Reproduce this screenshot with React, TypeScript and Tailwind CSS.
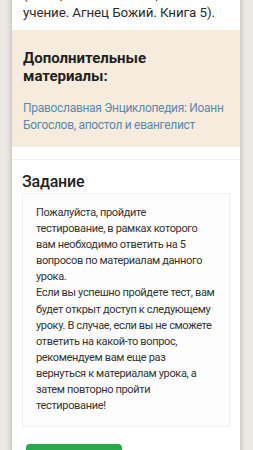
const Line = ({ children }: { children: React.ReactNode }) => (
  <span className="block whitespace-nowrap">{children}</span>
);

export default function App() {
  return (
    <div className="w-[253px] h-[450px] overflow-hidden bg-[#ece8e4] font-['Roboto','Noto_Sans',sans-serif]">
      <div className="ml-[12px] w-[228px] bg-white shadow-[0_0_4px_2px_rgba(120,100,90,0.25)]">
        <div className="px-[11px] pb-[8px] text-[13.4px] leading-[18px] tracking-[-0.1px] text-[#2c2c2c] -mt-[14px]">
          <Line>(Священное Писание, Богословское</Line>
          <Line>учение. Агнец Божий. Книга 5).</Line>
        </div>
        <div className="bg-[#f5ecdd] px-[11px] pt-[19px] pb-[13px]">
          <h3 className="text-[15px] leading-[18px] font-bold text-[#1f1f1f]">
            <Line>Дополнительные</Line>
            <Line>материалы:</Line>
          </h3>
          <p className="mt-[15px] text-[12px] leading-[17px] tracking-[-0.3px] text-[#5d88ab]">
            <Line>Православная Энциклопедия: Иоанн</Line>
            <Line>Богослов, апостол и евангелист</Line>
          </p>
        </div>
        <div className="h-[13px] border-b border-[#f0f0f0]" />
        <div className="px-[10px] pt-[12px]">
          <h3 className="text-[16px] leading-[20px] font-medium tracking-[-0.2px] text-[#1f1f1f]">Задание</h3>
          <div className="mt-[1px] border border-[#efefef] bg-[#fdfdfd] pl-[13px] pr-[4px] pt-[11px] pb-[12px] text-[11px] leading-[16.1px] tracking-[-0.35px] text-[#333]">
            <Line>Пожалуйста, пройдите</Line>
            <Line>тестирование, в рамках которого</Line>
            <Line>вам необходимо ответить на 5</Line>
            <Line>вопросов по материалам данного</Line>
            <Line>урока.</Line>
            <Line>Если вы успешно пройдете тест, вам</Line>
            <Line>будет открыт доступ к следующему</Line>
            <Line>уроку. В случае, если вы не сможете</Line>
            <Line>ответить на какой-то вопрос,</Line>
            <Line>рекомендуем вам еще раз</Line>
            <Line>вернуться к материалам урока, а</Line>
            <Line>затем повторно пройти</Line>
            <Line>тестирование!</Line>
          </div>
          <div className="mt-[17px] ml-[4px] w-[96px] h-[30px] rounded-[4px] bg-[#2aa84c]" />
        </div>
      </div>
    </div>
  );
}
